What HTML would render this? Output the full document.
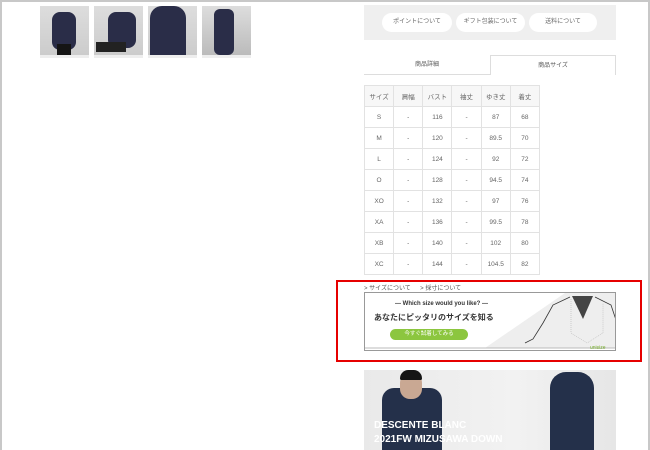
<!DOCTYPE html><html><head><meta charset="utf-8"><style>
*{margin:0;padding:0;box-sizing:border-box}
body{width:650px;height:450px;overflow:hidden;background:#fff;font-family:"Liberation Sans","Noto Sans CJK JP",sans-serif;color:#555;position:relative}
.frame{position:absolute;inset:0;border:2px solid #c8c8c8;border-bottom:none;pointer-events:none;z-index:9}
.a{position:absolute}
.th{background:#e3e3e3;overflow:hidden}
.cap{height:3px;background:#eee}
.btn{position:absolute;top:13px;height:19px;background:#fff;border-radius:10px;font-size:6px;text-align:center;line-height:19px;color:#666}
table{border-collapse:collapse;position:absolute;left:364px;top:85px;width:176px;font-size:6.5px;color:#666}
td{border:1px solid #e2e2e2;height:21px;text-align:center;width:29px}
tr:first-child td{background:#f7f7f7}
</style></head><body>
<div class="frame"></div>
<div class="a th" style="left:40px;top:6px;width:49px;height:49px;background:linear-gradient(#ddd,#ccc)"><div class="a" style="left:12px;top:6px;width:24px;height:38px;background:#2a2d48;border-radius:8px"></div><div class="a" style="left:17px;top:38px;width:14px;height:11px;background:#151515"></div></div>
<div class="a th" style="left:94px;top:6px;width:49px;height:49px;background:linear-gradient(#ddd,#ccc)"><div class="a" style="left:14px;top:6px;width:28px;height:36px;background:#2a2d48;border-radius:8px"></div><div class="a" style="left:2px;top:36px;width:30px;height:10px;background:#222"></div></div>
<div class="a th" style="left:148px;top:6px;width:49px;height:49px;background:linear-gradient(#ddd,#ccc)"><div class="a" style="left:2px;top:0;width:36px;height:49px;background:#2a2d48;border-radius:12px 12px 0 0"></div></div>
<div class="a th" style="left:202px;top:6px;width:49px;height:49px;background:linear-gradient(#ddd,#bbb)"><div class="a" style="left:12px;top:3px;width:20px;height:46px;background:#2a2d48;border-radius:6px"></div></div>
<div class="a cap" style="left:40px;top:55px;width:49px"></div><div class="a cap" style="left:94px;top:55px;width:49px"></div><div class="a cap" style="left:148px;top:55px;width:49px"></div><div class="a cap" style="left:202px;top:55px;width:49px"></div>
<div class="a" style="left:364px;top:5px;width:252px;height:35px;background:#efefef"></div>
<div class="btn" style="left:382px;width:70px">ポイントについて</div>
<div class="btn" style="left:456px;width:69px">ギフト包装について</div>
<div class="btn" style="left:529px;width:68px">送料について</div>
<div class="a" style="left:364px;top:55px;width:126px;height:20px;border-bottom:1px solid #ddd;font-size:6px;text-align:center;line-height:20px">商品詳細</div>
<div class="a" style="left:490px;top:55px;width:126px;height:20px;border:1px solid #ddd;border-bottom:none;font-size:6px;text-align:center;line-height:20px">商品サイズ</div>
<table>
<tr><td>サイズ</td><td>肩幅</td><td>バスト</td><td>袖丈</td><td>ゆき丈</td><td>着丈</td></tr>
<tr><td>S</td><td>-</td><td>116</td><td>-</td><td>87</td><td>68</td></tr>
<tr><td>M</td><td>-</td><td>120</td><td>-</td><td>89.5</td><td>70</td></tr>
<tr><td>L</td><td>-</td><td>124</td><td>-</td><td>92</td><td>72</td></tr>
<tr><td>O</td><td>-</td><td>128</td><td>-</td><td>94.5</td><td>74</td></tr>
<tr><td>XO</td><td>-</td><td>132</td><td>-</td><td>97</td><td>76</td></tr>
<tr><td>XA</td><td>-</td><td>136</td><td>-</td><td>99.5</td><td>78</td></tr>
<tr><td>XB</td><td>-</td><td>140</td><td>-</td><td>102</td><td>80</td></tr>
<tr><td>XC</td><td>-</td><td>144</td><td>-</td><td>104.5</td><td>82</td></tr>
</table>
<div class="a" style="left:336px;top:280px;width:306px;height:82px;border:2px solid #e60000"></div>
<div class="a" style="left:364px;top:283px;font-size:6px;color:#555">&gt; サイズについて　&nbsp; &gt; 採寸について</div>
<div class="a" style="left:364px;top:292px;width:252px;height:59px;border:1px solid #999;background:#fff;overflow:hidden">
<svg class="a" style="left:0;top:0" width="252" height="59"><polygon points="120,55 200,0 252,0 252,55" fill="#eee"/>
<path d="M205,4 L188,12 L178,30 L168,46 L160,50 M230,4 L246,12 L252,30" stroke="#333" fill="none" stroke-width="0.8"/>
<path d="M206,6 L206,40 L222,50 L238,40 L238,10" stroke="#aaa" fill="none" stroke-width="0.5" stroke-dasharray="1,1"/>
<polygon points="207,3 218,26 228,3" fill="#444"/>
<line x1="0" y1="55" x2="252" y2="55" stroke="#bbb"/></svg>
<div class="a" style="left:30px;top:8px;font-size:6px;font-weight:bold;color:#333">— Which size would you like? —</div>
<div class="a" style="left:9px;top:19px;font-size:8px;font-weight:bold;color:#333">あなたにピッタリのサイズを知る</div>
<div class="a" style="left:25px;top:36px;width:78px;height:11px;border-radius:6px;background:#8cc63f;color:#fff;font-size:5.5px;text-align:center;line-height:11px">今すぐ試着してみる</div>
<div class="a" style="left:225px;top:52px;font-size:5px;color:#7ab030">unisize</div>
</div>
<div class="a" style="left:364px;top:370px;width:252px;height:80px;background:linear-gradient(90deg,#e9e9e9,#f2f2f2 60%,#e6e6e6);overflow:hidden">
<div class="a" style="left:18px;top:18px;width:60px;height:70px;background:#24304a;border-radius:12px 12px 0 0"></div>
<div class="a" style="left:36px;top:3px;width:22px;height:26px;background:#c9a893;border-radius:10px"></div>
<div class="a" style="left:36px;top:0;width:22px;height:10px;background:#151515;border-radius:10px 10px 2px 2px"></div>
<div class="a" style="left:186px;top:2px;width:44px;height:80px;background:#24304a;border-radius:16px 16px 0 0"></div>
<div class="a" style="left:10px;top:49px;font-size:10px;font-weight:bold;color:#fff;line-height:14px">DESCENTE BLANC<br>2021FW MIZUSAWA DOWN</div>
</div>
</body></html>
